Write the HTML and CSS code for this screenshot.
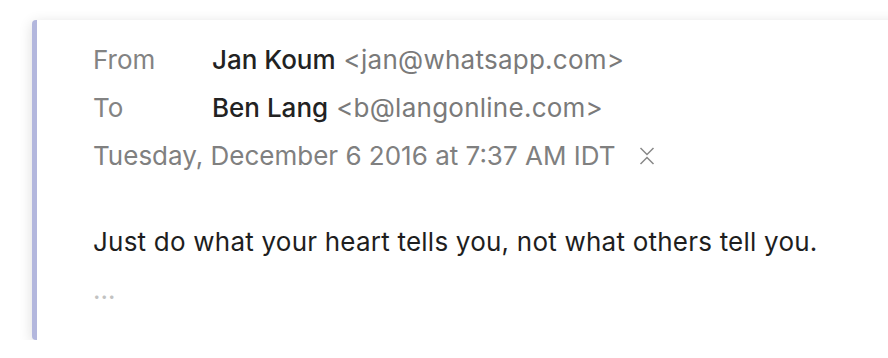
FILE: index.html
```html
<!DOCTYPE html>
<html lang="en">

<head>
    <meta charset="UTF-8">
    <meta name="viewport" content="width=device-width, initial-scale=1.0">
    <title>Email</title>
    <link rel="stylesheet" href="styles.css">
</head>

<body>
    <div class="mail">
        <div class="header">
            <div class="row">
                <span class="label">From</span>
                <span class="name">Jan Koum</span>
                <span class="addr">&lt;jan@whatsapp.com&gt;</span>
            </div>
            <div class="row">
                <span class="label">To</span>
                <span class="name">Ben Lang</span>
                <span class="addr">&lt;b@langonline.com&gt;</span>
            </div>
            <div class="row date">
                Tuesday, December 6 2016 at 7:37 AM IDT
                <svg class="collapse" width="16" height="20" viewBox="0 0 16 20">
                    <path d="M1.5 2 L8 8.5 L14.5 2 M1.5 18 L8 11.5 L14.5 18" fill="none" stroke="#888" stroke-width="1.5"/>
                </svg>
            </div>
        </div>
        <p class="body">Just do what your heart tells you, not what others tell you.</p>
        <div class="more">&hellip;</div>
    </div>
</body>

</html>
```

FILE: styles.css
```css
body {
    margin: 0;
    background: #fff;
    font-family: 'Inter', sans-serif;
    overflow: hidden;
}

.mail {
    margin: 20px -40px 0 32px;
    height: 320px;
    box-sizing: border-box;
    background: #fff;
    border-left: 5px solid #b3b7dd;
    border-radius: 4px 0 0 4px;
    box-shadow: 0 3px 14px rgba(0, 0, 0, 0.14);
    padding: 16px 0 0 56px;
}

.row {
    display: flex;
    align-items: baseline;
    height: 48px;
    line-height: 48px;
    font-size: 26px;
}

.label {
    width: 119px;
    color: #838383;
}

.name {
    color: #222;
    font-weight: 500;
    margin-right: 8px;
}

.addr {
    color: #7a7a7a;
    letter-spacing: 0.25px;
}

.date {
    color: #808080;
    align-items: center;
}

.collapse {
    margin-left: 24px;
}

.body {
    margin: 38px 0 0;
    font-size: 26px;
    line-height: 48px;
    letter-spacing: 0.22px;
    color: #1e1e1e;
}

.more {
    font-size: 26px;
    line-height: 48px;
    letter-spacing: 1px;
    color: #c2c2c2;
}
```
